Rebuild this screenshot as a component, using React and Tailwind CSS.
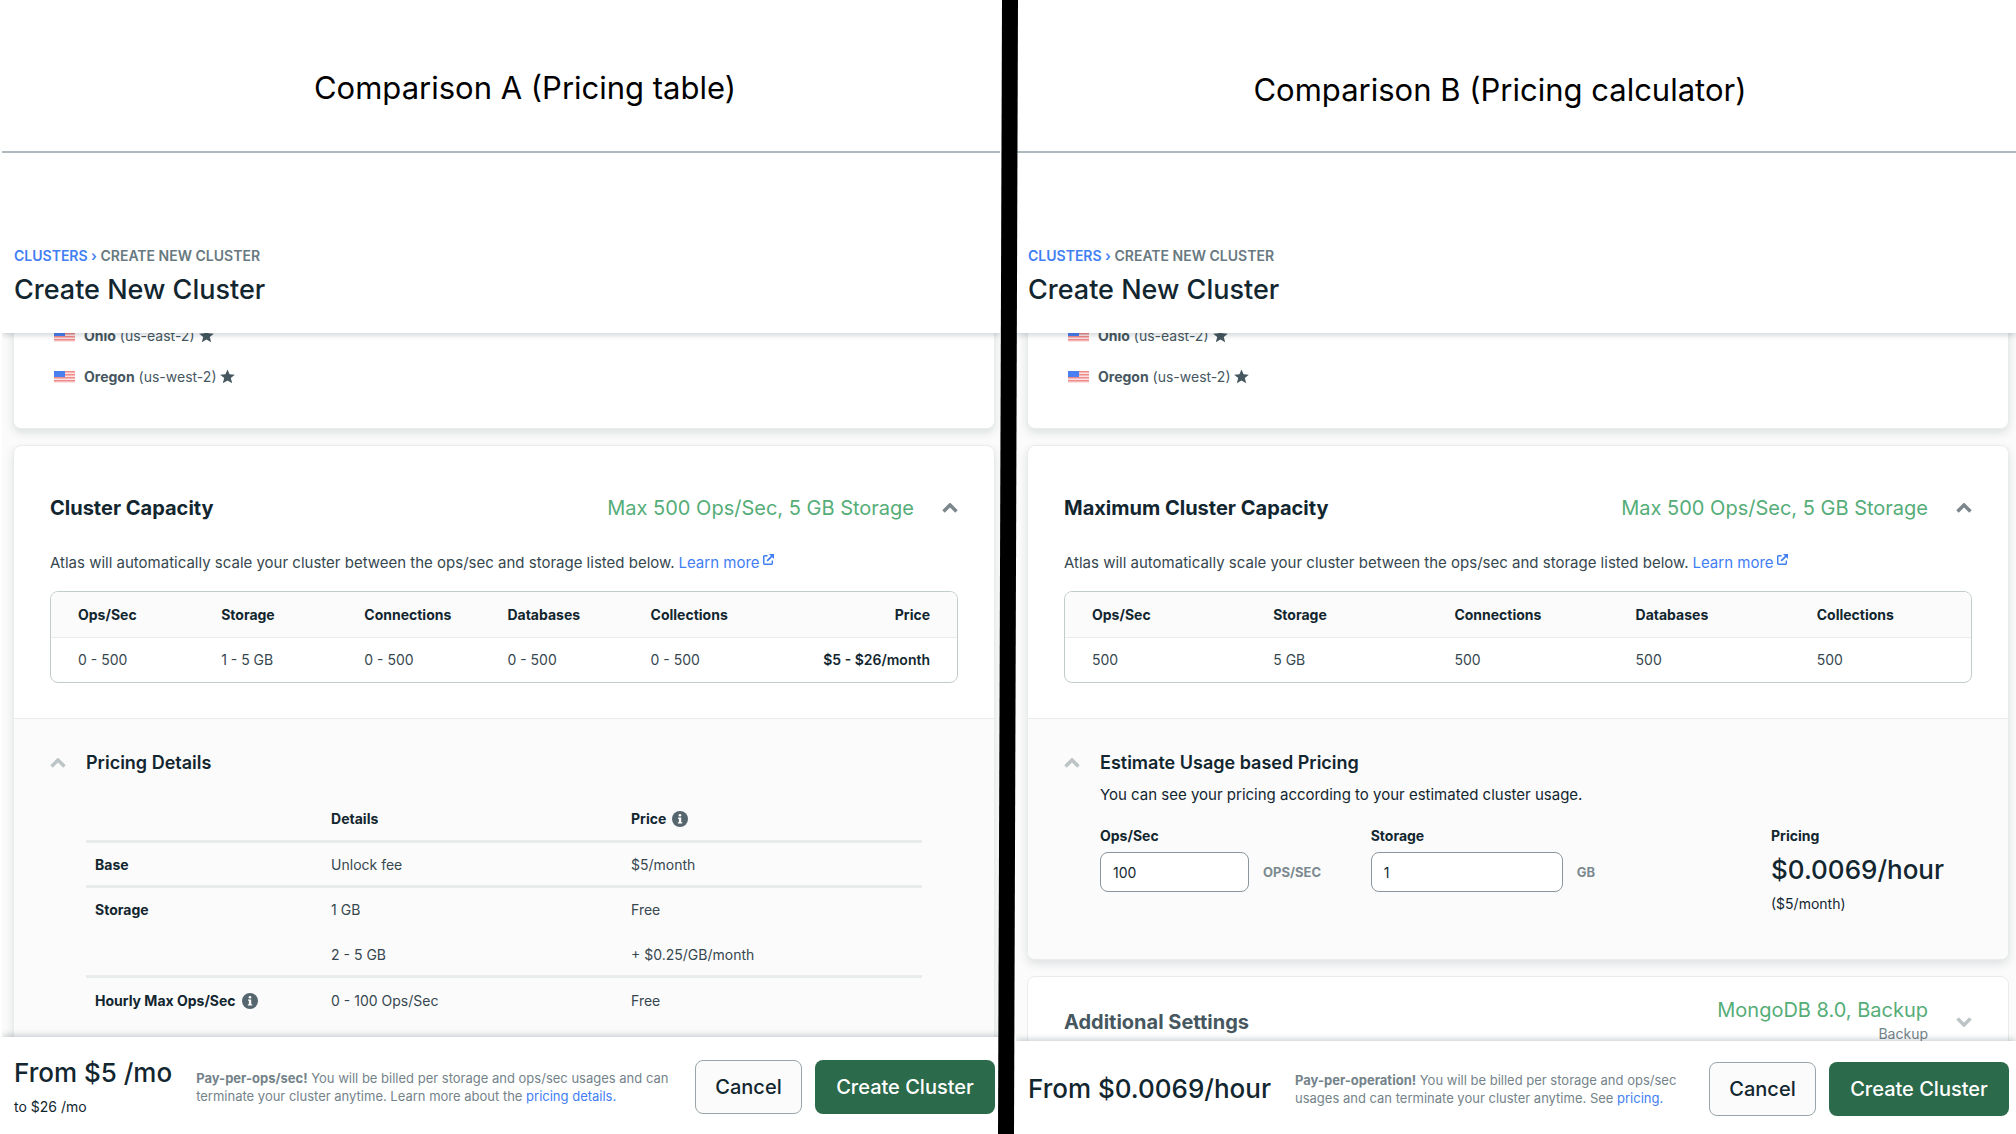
const capacityA = [
  { label: 'Ops/Sec', value: '0 - 500' },
  { label: 'Storage', value: '1 - 5 GB' },
  { label: 'Connections', value: '0 - 500' },
  { label: 'Databases', value: '0 - 500' },
  { label: 'Collections', value: '0 - 500' },
  { label: 'Price', value: '$5 - $26/month', price: true },
]

const capacityB = [
  { label: 'Ops/Sec', value: '500' },
  { label: 'Storage', value: '5 GB' },
  { label: 'Connections', value: '500' },
  { label: 'Databases', value: '500' },
  { label: 'Collections', value: '500' },
]

const pricingRows = [
  { name: 'Base', detail: 'Unlock fee', price: '$5/month', line: true },
  { name: 'Storage', detail: '1 GB', price: 'Free', line: true },
  { name: '', detail: '2 - 5 GB', price: '+ $0.25/GB/month' },
  { name: 'Hourly Max Ops/Sec', info: true, detail: '0 - 100 Ops/Sec', price: 'Free', line: true },
]

function Chevron({ down, className }) {
  return (
    <svg viewBox="0 0 16 10" className={`w-4 h-[10px] shrink-0 ${className}`} fill="none" stroke="currentColor" strokeWidth="3.5">
      <path d={down ? 'M1.500 1.500l6.500 6.500 6.500-6.500' : 'M1.500 8.500l6.500-6.500 6.500 6.500'} />
    </svg>
  )
}

function Flag() {
  return (
    <svg viewBox="0 0 21 12" className="w-[21px] h-3">
      <rect width="21" height="12" fill="#fbe3e3" />
      {[0, 3, 6, 9].map((y) => (
        <rect key={y} y={y} width="21" height="1.5" fill="#f08a8a" />
      ))}
      <rect width="11" height="6" fill="#4a7ff0" />
    </svg>
  )
}

function Star() {
  return (
    <svg viewBox="0 0 16 16" className="w-[15px] h-[15px]" fill="#46575f">
      <path d="M8 .5l2.200 5.200 5.600.4-4.300 3.600 1.500 5.600L8 12.300l-5 3 1.500-5.600L.2 6.100l5.600-.4z" />
    </svg>
  )
}

function Info() {
  return (
    <svg viewBox="0 0 16 16" className="w-4 h-4 shrink-0">
      <circle cx="8" cy="8" r="8" fill="#56666e" />
      <path d="M6 6.500h3.200v4.700h1v1.300H5.900v-1.300h1V7.800H6z" fill="#fff" />
      <circle cx="8" cy="4.200" r="1.300" fill="#fff" />
    </svg>
  )
}

function External() {
  return (
    <svg viewBox="0 0 12 12" className="inline w-[11px] h-[11px] ml-[3px] mb-2" fill="none" stroke="currentColor" strokeWidth="1.600">
      <path d="M5 1.800H1.800a1 1 0 0 0-1 1v7.400a1 1 0 0 0 1 1h7.400a1 1 0 0 0 1-1V7" />
      <path d="M4.500 7.500l5-5" strokeWidth="2" />
      <path d="M6.500 0H12v5.500z" fill="currentColor" stroke="none" />
    </svg>
  )
}

function Region({ name, code }) {
  return (
    <li className="flex items-center h-[41px] pl-10 text-[14px] text-[#46575f]">
      <Flag />
      <span className="ml-[9px] mr-1"><b className="font-bold">{name}</b> ({code})</span>
      <Star />
    </li>
  )
}

function PageHeader() {
  return (
    <header className="relative z-10 h-[180px] shrink-0 bg-white pt-[93px] pl-3 shadow-[0_2px_6px_rgba(0,30,43,0.2)]">
      <nav className="text-[14px] leading-5 font-semibold text-[#687980]">
        <a href="#clusters" className="text-[#3f7ef3]">CLUSTERS ›</a> CREATE NEW CLUSTER
      </nav>
      <h1 className="mt-[6px] text-[27px] leading-9 font-medium text-[#12262f]">Create New Cluster</h1>
    </header>
  )
}

function CapacityTable({ columns }) {
  return (
    <div className="mt-[18px] rounded-lg border border-[#c3cccc] overflow-hidden">
      <table className="w-full table-fixed text-[14px] leading-5 text-left">
        <thead className="bg-[#fbfbfb] text-[#12262f]">
          <tr className="h-[45px] border-b border-[#e8edeb]">
            {columns.map((c) => (
              <th key={c.label} scope="col" className={`font-bold ${c.price ? 'w-[21%] pr-[27px] text-right' : 'pl-[27px]'}`}>{c.label}</th>
            ))}
          </tr>
        </thead>
        <tbody className="text-[#36474f]">
          <tr className="h-[45px]">
            {columns.map((c) => (
              <td key={c.label} className={c.price ? 'pr-[27px] text-right font-semibold text-[#12262f]' : 'pl-[27px]'}>{c.value}</td>
            ))}
          </tr>
        </tbody>
      </table>
    </div>
  )
}

function Capacity({ title, columns, children }) {
  return (
    <section className="mt-4 rounded-lg border border-[#e8edeb] bg-white shadow-[0_4px_10px_rgba(0,30,43,0.12)] overflow-hidden">
      <div className="px-9 pt-12 pb-[35px]">
        <div className="flex items-center h-7 text-[20px] leading-7">
          <h2 className="font-bold text-[#12262f]">{title}</h2>
          <span className="ml-auto mr-7 text-[#55ad78]">Max 500 Ops/Sec, 5 GB Storage</span>
          <button aria-label="Collapse"><Chevron className="text-[#7c878c]" /></button>
        </div>
        <p className="mt-[31px] text-[15px] leading-5 text-[#36474f]">
          Atlas will automatically scale your cluster between the ops/sec and storage listed below.
          <a href="#learn" className="ml-1 text-[#3f7ef3]">Learn more<External /></a>
        </p>
        <CapacityTable columns={columns} />
      </div>
      <div className="border-t border-[#e8edeb] bg-[#fbfbfb] px-9">{children}</div>
    </section>
  )
}

function SectionTitle({ children }) {
  return (
    <div className="flex items-center">
      <button aria-label="Collapse"><Chevron className="text-[#bcc4c6]" /></button>
      <h3 className="ml-5 text-[18px] leading-6 font-semibold text-[#12262f]">{children}</h3>
    </div>
  )
}

function PricingDetails() {
  return (
    <div className="pt-8 pb-9">
      <SectionTitle>Pricing Details</SectionTitle>
      <div className="px-9 mt-[22px]">
        <table className="w-full table-fixed text-[14px] leading-5 text-left text-[#36474f]">
          <thead className="text-[#12262f]">
            <tr className="h-11">
              <th className="w-[28%]"><span className="sr-only">Item</span></th>
              <th scope="col" className="w-[36%] pl-[11px] font-bold">Details</th>
              <th scope="col" className="pl-[10px] font-bold"><span className="flex items-center gap-[6px]">Price <Info /></span></th>
            </tr>
          </thead>
          <tbody>
            {pricingRows.map((r) => (
              <tr key={r.detail} className={`h-[45px] border-t-3 ${r.line ? 'border-[#e8ecec]' : 'border-transparent'}`}>
                <th scope="row" className="pt-[3px] pl-[9px] font-bold text-[#12262f]">
                  <span className="flex items-center gap-[6px]">{r.name} {r.info && <Info />}</span>
                </th>
                <td className="pt-[3px] pl-[11px]">{r.detail}</td>
                <td className="pt-[3px] pl-[10px]">{r.price}</td>
              </tr>
            ))}
          </tbody>
        </table>
      </div>
    </div>
  )
}

function Estimate() {
  return (
    <div className="pt-8 h-[240px] text-[14px] leading-5 text-[#12262f]">
      <SectionTitle>Estimate Usage based Pricing</SectionTitle>
      <p className="pl-9 mt-[10px] text-[15px]">You can see your pricing according to your estimated cluster usage.</p>
      <div className="pl-9 mt-[21px] flex">
        <div>
          <label htmlFor="ops" className="block mb-[6px] font-bold">Ops/Sec</label>
          <div className="flex items-center gap-[14px]">
            <input id="ops" defaultValue="100" className="w-[149px] h-10 rounded-lg border border-[#8a969b] bg-white px-3" />
            <span className="text-[13px] font-bold text-[#7b8a90]">OPS/SEC</span>
          </div>
        </div>
        <div className="ml-auto">
          <label htmlFor="storage" className="block mb-[6px] font-bold">Storage</label>
          <div className="flex items-center gap-[14px]">
            <input id="storage" defaultValue="1" className="w-[192px] h-10 rounded-lg border border-[#8a969b] bg-white px-3" />
            <span className="text-[13px] font-bold text-[#7b8a90]">GB</span>
          </div>
        </div>
        <div className="ml-44 w-[201px]">
          <div className="font-bold">Pricing</div>
          <div className="mt-[6px] text-[26px] leading-9 font-medium">$0.0069/hour</div>
          <div className="mt-[6px]">($5/month)</div>
        </div>
      </div>
    </div>
  )
}

function Footer({ price, sub, children, className }) {
  return (
    <footer className={`relative z-10 shrink-0 bg-white flex items-center pt-[2px] pl-3 shadow-[0_-2px_6px_rgba(0,30,43,0.2)] ${className}`}>
      <div className="shrink-0 whitespace-nowrap text-[#12262f]">
        <div className="text-[26px] leading-9 font-medium">{price}</div>
        {sub && <div className="mt-1 text-[14px] leading-6">{sub}</div>}
      </div>
      <p className="ml-6 flex-1 text-[13px] leading-[18px] text-[#74838a]">{children}</p>
      <button className="ml-5 h-[54px] w-[107px] shrink-0 rounded-lg border border-[#9aa5a9] bg-[#fbfbfb] text-[20px] font-medium text-[#12262f]">Cancel</button>
      <button className="ml-[13px] h-[54px] w-[180px] shrink-0 rounded-lg bg-[#2b6a4b] text-[20px] font-medium text-white">Create Cluster</button>
    </footer>
  )
}

function Panel({ title, className, titleClass, bodyClass, footer, children }) {
  return (
    <div className={`min-w-0 min-h-0 flex flex-col overflow-hidden bg-white ${className}`}>
      <div className={`relative z-20 h-[153px] shrink-0 flex items-center justify-center border-b-2 border-[#b0b9bd] bg-white text-[31px] leading-10 text-black ${titleClass}`}>{title}</div>
      <PageHeader />
      <div className={`flex-1 min-h-0 overflow-hidden bg-[#fbfbfb] ${bodyClass}`}>
        <ul className="-mt-[19px] pb-[31px] rounded-lg border border-[#e8edeb] bg-white shadow-[0_4px_10px_rgba(0,30,43,0.12)]">
          <Region name="Ohio" code="us-east-2" />
          <Region name="Oregon" code="us-west-2" />
        </ul>
        {children}
      </div>
      {footer}
    </div>
  )
}

export default function App() {
  return (
    <main className="h-screen grid grid-cols-[1fr_16px_1fr] grid-rows-1 overflow-hidden font-['Inter',sans-serif]">
      <Panel
        title="Comparison A (Pricing table)"
        className="border-l-2 border-white"
        titleClass="pt-6 pl-12"
        bodyClass="pl-[11px] pr-[5px]"
        footer={
          <Footer price="From $5 /mo" sub="to $26 /mo" className="h-[97px] pr-[5px]">
            <b className="font-bold">Pay-per-ops/sec!</b> You will be billed per storage and ops/sec usages and can terminate your cluster anytime. Learn more about the <a href="#pricing" className="text-[#3f7ef3]">pricing details.</a>
          </Footer>
        }
      >
        <Capacity title="Cluster Capacity" columns={capacityA}>
          <PricingDetails />
        </Capacity>
      </Panel>

      <div className="relative z-30 bg-white">
        {/* the bar leans slightly to the left towards the bottom */}
        <svg viewBox="0 0 20 100" preserveAspectRatio="none" className="absolute top-0 -left-0.5 w-5 h-full">
          <polygon points="4,0 20,0 16,100 0,100" fill="#000" />
        </svg>
      </div>

      <Panel
        title="Comparison B (Pricing calculator)"
        titleClass="pt-7 pr-8"
        bodyClass="pl-[11px] pr-[7px]"
        footer={
          <Footer price="From $0.0069/hour" className="h-[93px] pr-[7px]">
            <b className="font-bold">Pay-per-operation!</b> You will be billed per storage and ops/sec usages and can terminate your cluster anytime. See <a href="#pricing" className="text-[#3f7ef3]">pricing.</a>
          </Footer>
        }
      >
        <Capacity title="Maximum Cluster Capacity" columns={capacityB}>
          <Estimate />
        </Capacity>
        <section className="mt-4 flex items-center h-[112px] px-9 pb-5 rounded-lg border border-[#e8edeb] bg-white">
          <h2 className="text-[20px] font-bold text-[#46575f]">Additional Settings</h2>
          <div className="ml-auto mr-7 text-right">
            <div className="text-[20px] leading-6 text-[#55ad78]">MongoDB 8.0, Backup</div>
            <div className="text-[14px] leading-6 text-[#74838a]">Backup</div>
          </div>
          <button aria-label="Expand"><Chevron down className="text-[#bcc4c6]" /></button>
        </section>
      </Panel>
    </main>
  )
}
